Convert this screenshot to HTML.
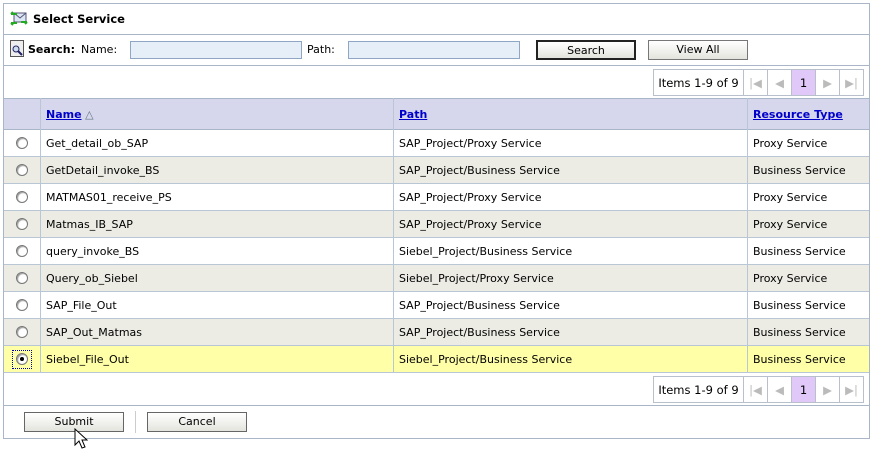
<!DOCTYPE html>
<html><head><style>
*{margin:0;padding:0;box-sizing:border-box}
body{width:873px;height:454px;background:#fff;font-family:"DejaVu Sans","Liberation Sans",sans-serif;font-size:11px;color:#000;position:relative;overflow:hidden}
.a{position:absolute}
.box{left:3px;top:3px;width:867px;height:436px;border:1px solid #a9b6c8}
.hl{left:4px;width:865px;height:1px;background:#a9b6c8}
.inp{height:18px;border:1px solid #8fa7c4;background:#e6eef7}
.btn{height:20px;border:1px solid #555;background:linear-gradient(#fff,#e4e4de);text-align:center;line-height:18px;font-size:11px}
.pg{top:69px;height:27px;border:1px solid #b8c0cc;display:flex;font-size:11.5px}
.pg div{border-right:1px solid #b8c0cc;display:flex;align-items:center;justify-content:center;color:#bbb}
.pg div:last-child{border-right:0}
.row{left:4px;width:865px;height:27px;border-bottom:1px solid #b8c6d6}
.row span{position:absolute;top:7px}
.vl{width:1px;background:#b8c6d6}
.rad{position:absolute;left:12px;top:7px;width:12px;height:12px;border-radius:50%;border:1px solid #777;background:#fff;box-shadow:inset 1px 1px 1px #999}
a{color:#0000cc;font-weight:bold;text-decoration:underline}
</style></head><body>
<div class="a box"></div>
<svg class="a" style="left:10px;top:10px" width="18" height="16"><rect x="4" y="3" width="12" height="9" fill="#dde6f5" stroke="#557"/><path d="M4 3l6 5 6-5" fill="none" stroke="#557"/><path d="M1 4h6M1 4l2-2M17 12h-6M17 12l-2 2" stroke="#2a2" stroke-width="2"/><path d="M1 13h6M1 13l2 2" stroke="#2a2" stroke-width="2"/></svg>
<div class="a" style="left:33px;top:12px;font-weight:bold;font-size:11.5px">Select Service</div>
<div class="a hl" style="top:34px"></div>
<svg class="a" style="left:10px;top:40px" width="14" height="17"><rect x="0.5" y="0.5" width="13" height="16" fill="#eee" stroke="#555"/><circle cx="6" cy="9" r="3" fill="#cde" stroke="#226"/><path d="M8 11l4 4" stroke="#226" stroke-width="2"/></svg>
<div class="a" style="left:28px;top:43px;font-weight:bold">Search:</div>
<div class="a" style="left:81px;top:43px">Name:</div>
<div class="a inp" style="left:130px;top:41px;width:172px"></div>
<div class="a" style="left:307px;top:43px">Path:</div>
<div class="a inp" style="left:348px;top:41px;width:172px"></div>
<div class="a btn" style="left:536px;top:40px;width:100px;border:2px solid #222">Search</div>
<div class="a btn" style="left:648px;top:40px;width:100px;border-color:#777">View All</div>
<div class="a hl" style="top:65px"></div>
<div class="a pg" style="left:653px"><div style="width:90px;color:#000">Items 1-9 of 9</div><div style="width:24px">|◀</div><div style="width:24px">◀</div><div style="width:24px;background:#e0c8f8;color:#000">1</div><div style="width:24px">▶</div><div style="width:23px">▶|</div></div>
<div class="a" style="left:4px;top:98px;width:865px;height:32px;background:#d6d6ec;border-top:1px solid #a9b6c8;border-bottom:1px solid #a9b6c8"></div>
<div class="a" style="left:46px;top:108px"><a>Name</a> <span style="color:#678">△</span></div>
<div class="a" style="left:399px;top:108px"><a>Path</a></div>
<div class="a" style="left:753px;top:108px"><a>Resource Type</a></div>
<div class="a" style="top:130px;left:0">
<div class="a row" style="top:0;background:#fff"><div class="rad"></div><span style="left:42px">Get_detail_ob_SAP</span><span style="left:395px">SAP_Project/Proxy Service</span><span style="left:749px">Proxy Service</span></div>
<div class="a row" style="top:27px;background:#ececE4"><div class="rad"></div><span style="left:42px">GetDetail_invoke_BS</span><span style="left:395px">SAP_Project/Business Service</span><span style="left:749px">Business Service</span></div>
<div class="a row" style="top:54px;background:#fff"><div class="rad"></div><span style="left:42px">MATMAS01_receive_PS</span><span style="left:395px">SAP_Project/Proxy Service</span><span style="left:749px">Proxy Service</span></div>
<div class="a row" style="top:81px;background:#ececE4"><div class="rad"></div><span style="left:42px">Matmas_IB_SAP</span><span style="left:395px">SAP_Project/Proxy Service</span><span style="left:749px">Proxy Service</span></div>
<div class="a row" style="top:108px;background:#fff"><div class="rad"></div><span style="left:42px">query_invoke_BS</span><span style="left:395px">Siebel_Project/Business Service</span><span style="left:749px">Business Service</span></div>
<div class="a row" style="top:135px;background:#ececE4"><div class="rad"></div><span style="left:42px">Query_ob_Siebel</span><span style="left:395px">Siebel_Project/Proxy Service</span><span style="left:749px">Proxy Service</span></div>
<div class="a row" style="top:162px;background:#fff"><div class="rad"></div><span style="left:42px">SAP_File_Out</span><span style="left:395px">SAP_Project/Business Service</span><span style="left:749px">Business Service</span></div>
<div class="a row" style="top:189px;background:#ececE4"><div class="rad"></div><span style="left:42px">SAP_Out_Matmas</span><span style="left:395px">SAP_Project/Business Service</span><span style="left:749px">Business Service</span></div>
<div class="a row" style="top:216px;background:#ffffa8"><div style="position:absolute;left:8px;top:4px;width:20px;height:19px;border:1px dotted #00a"></div><div class="rad"><div style="position:absolute;left:3px;top:3px;width:4px;height:4px;background:#000;border-radius:50%"></div></div><span style="left:42px">Siebel_File_Out</span><span style="left:395px">Siebel_Project/Business Service</span><span style="left:749px">Business Service</span></div>
</div>
<div class="a vl" style="left:40px;top:98px;height:275px"></div>
<div class="a vl" style="left:393px;top:98px;height:275px"></div>
<div class="a vl" style="left:747px;top:98px;height:275px"></div>
<div class="a pg" style="left:653px;top:376px"><div style="width:90px;color:#000">Items 1-9 of 9</div><div style="width:24px">|◀</div><div style="width:24px">◀</div><div style="width:24px;background:#e0c8f8;color:#000">1</div><div style="width:24px">▶</div><div style="width:23px">▶|</div></div>
<div class="a hl" style="top:405px"></div>
<div class="a btn" style="left:24px;top:412px;width:100px;border-color:#666">Submit</div>
<div class="a" style="left:135px;top:411px;width:1px;height:22px;background:#ccc"></div>
<div class="a btn" style="left:147px;top:412px;width:100px;border-color:#666">Cancel</div>
<svg class="a" style="left:74px;top:428px" width="14" height="22"><path d="M1 1v16l4-4 3 7 3-1-3-7h5z" fill="#fff" stroke="#000"/></svg>
</body></html>
